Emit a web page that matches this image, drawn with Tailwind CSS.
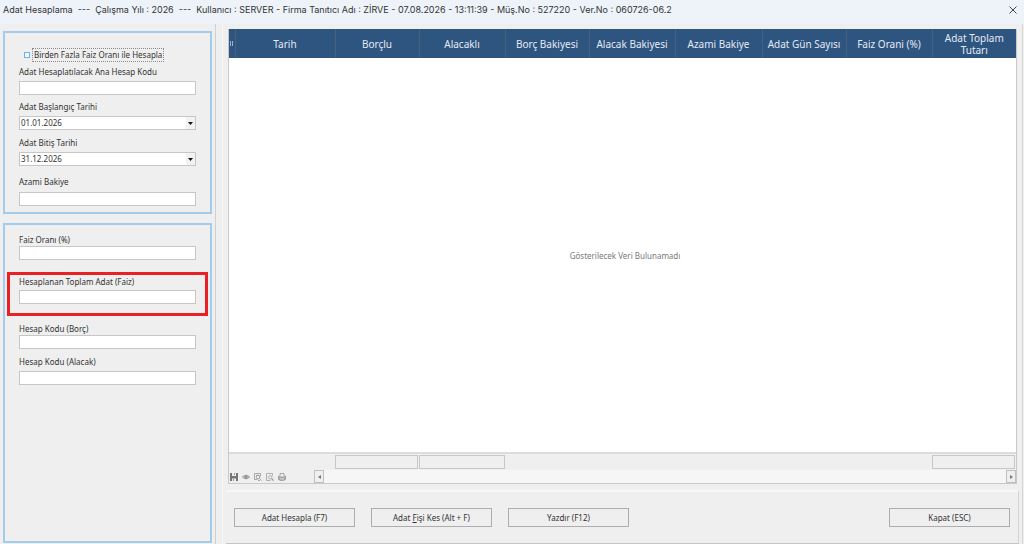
<!DOCTYPE html>
<html lang="tr">
<head>
    <meta charset="UTF-8">
    <meta name="viewport" content="width=device-width, initial-scale=1.0">
    <title>Adat Hesaplama</title>
    <script src="https://cdn.jsdelivr.net/npm/@tailwindcss/browser@4"></script>
</head>
<body class="flex flex-col h-screen overflow-hidden bg-[#efefef] text-[#333333] font-['Noto_Sans',sans-serif] text-[8px] leading-[12px]">
    <header class="flex items-center justify-between h-6 shrink-0 bg-[#eef3fa] pl-[3px] pr-[7px] pb-1 font-['Inter',sans-serif] text-[9px]">
        <h1 class="whitespace-pre">Adat Hesaplama  ---  Çalışma Yılı : 2026  ---  Kullanıcı : SERVER - Firma Tanıtıcı Adı : ZİRVE - 07.08.2026 - 13:11:39 - Müş.No : 527220 - Ver.No : 060726-06.2</h1>
        <button type="button" aria-label="Kapat" class="text-[#444444]">
            <svg class="size-2" viewBox="0 0 8 8" fill="none" stroke="currentColor"><path d="M0.5 0.5l7 7M7.5 0.5l-7 7"/></svg>
        </button>
    </header>

    <main class="flex flex-1 min-h-0">
        <aside class="flex flex-col gap-[9px] w-[216px] shrink-0 border-r border-[#cfcfcf] px-[3px] pt-[7px]">
            <section class="flex flex-col border-2 border-[#a3cbec] px-[14px] pt-4 pb-1.5">
                <div class="flex items-center gap-[3px] pl-[5px]">
                    <input type="checkbox" id="cokluFaiz" class="appearance-none size-[6px] border border-[#6cb2e6] bg-[#f4faff]">
                    <label for="cokluFaiz" class="outline-1 outline-dotted outline-[#8a8a8a] px-px">Birden Fazla Faiz Oranı ile Hesapla</label>
                </div>
                <label for="anaHesap" class="mt-[5px]">Adat Hesaplatılacak Ana Hesap Kodu</label>
                <input type="text" id="anaHesap" class="mt-[3px] h-[14px] w-full bg-white border border-[#c6c6c6] px-px">
                <label for="baslangic" class="mt-1.5">Adat Başlangıç Tarihi</label>
                <div class="relative mt-[3px]">
                    <select id="baslangic" class="block appearance-none h-[14px] w-full bg-white border border-[#c6c6c6] px-px">
                        <option>01.01.2026</option>
                    </select>
                    <svg class="absolute right-px top-px w-[9px] h-3 bg-[#f2f2f2] pointer-events-none" viewBox="0 0 9 12" fill="#111111"><path d="M2 5h5L4.500 8z"/></svg>
                </div>
                <label for="bitis" class="mt-[7px]">Adat Bitiş Tarihi</label>
                <div class="relative mt-[3px]">
                    <select id="bitis" class="block appearance-none h-[14px] w-full bg-white border border-[#c6c6c6] px-px">
                        <option>31.12.2026</option>
                    </select>
                    <svg class="absolute right-px top-px w-[9px] h-3 bg-[#f2f2f2] pointer-events-none" viewBox="0 0 9 12" fill="#111111"><path d="M2 5h5L4.500 8z"/></svg>
                </div>
                <label for="azami" class="mt-[10px]">Azami Bakiye</label>
                <input type="text" id="azami" class="mt-1 h-[14px] w-full bg-white border border-[#c6c6c6] px-px">
            </section>

            <section class="flex flex-col flex-1 border-2 border-[#a3cbec] px-[14px] pt-[9px] mb-px">
                <label for="faizOrani">Faiz Oranı (%)</label>
                <input type="text" id="faizOrani" class="h-[14px] w-full bg-white border border-[#c6c6c6] px-px">
                <div class="relative flex flex-col mt-4">
                    <label for="toplamAdat">Hesaplanan Toplam Adat (Faiz)</label>
                    <input type="text" id="toplamAdat" class="mt-[2px] h-[14px] w-full bg-white border border-[#c6c6c6] px-px">
                    <!-- kırmızı vurgu çerçevesi -->
                    <div class="absolute -inset-x-3 -top-1 -bottom-3 border-[3px] border-[#ea2024] pointer-events-none"></div>
                </div>
                <label for="hesapBorc" class="mt-[19px]">Hesap Kodu (Borç)</label>
                <input type="text" id="hesapBorc" class="h-[14px] w-full bg-white border border-[#c6c6c6] px-px">
                <label for="hesapAlacak" class="mt-[7px]">Hesap Kodu (Alacak)</label>
                <input type="text" id="hesapAlacak" class="mt-[3px] h-[14px] w-full bg-white border border-[#c6c6c6] px-px">
            </section>
        </aside>

        <div class="flex flex-col flex-1 min-w-0 ml-[6px] border-l border-[#f7f7f7] pt-[5px]">
            <div class="flex flex-col flex-1 min-h-0 ml-[5px] mr-[5px] border border-t-0 border-[#c9c9c9]">
                <div class="flex-1 min-h-0">
                    <table class="table-fixed w-full h-full border-collapse">
                        <colgroup>
                            <col class="w-[6px]">
                            <col class="w-[100px]">
                            <col class="w-[84px]">
                            <col class="w-[86px]">
                            <col class="w-[84px]">
                            <col class="w-[86px]">
                            <col class="w-[87px]">
                            <col class="w-[84px]">
                            <col class="w-[86px]">
                            <col>
                        </colgroup>
                        <thead class="bg-[#2e5480] text-[#e4ebf3] text-[10px]">
                            <tr class="h-[29px] *:font-normal *:p-0 *:border-r *:border-[#46607f] *:last:border-r-0">
                                <th><svg class="w-1 h-[5px] mx-auto" viewBox="0 0 4 5" fill="#9db4cf"><path d="M0 0h1v5h-1zM2 0h1v5h-1z"/></svg></th>
                                <th>Tarih</th>
                                <th>Borçlu</th>
                                <th>Alacaklı</th>
                                <th>Borç Bakiyesi</th>
                                <th>Alacak Bakiyesi</th>
                                <th>Azami Bakiye</th>
                                <th>Adat Gün Sayısı</th>
                                <th>Faiz Orani (%)</th>
                                <th>Adat Toplam Tutarı</th>
                            </tr>
                        </thead>
                        <tbody class="bg-white text-[#7a7a7a]">
                            <tr><td colspan="10" class="text-center align-middle pl-[5px] pt-0.5">Gösterilecek Veri Bulunamadı</td></tr>
                        </tbody>
                        <tfoot>
                            <tr class="h-[17px] border-t-2 border-[#dcdcdc] *:p-0">
                                <td></td>
                                <td></td>
                                <td><div class="h-[14px] border border-[#c8c8c8] mr-px"></div></td>
                                <td><div class="h-[14px] border border-[#c8c8c8]"></div></td>
                                <td></td>
                                <td></td>
                                <td></td>
                                <td></td>
                                <td></td>
                                <td><div class="h-[14px] border border-[#c8c8c8] mr-px"></div></td>
                            </tr>
                        </tfoot>
                    </table>
                </div>
                <div class="flex h-[13px] shrink-0">
                    <div class="flex items-center gap-1 w-[85px] pl-px text-[#959595]">
                        <button type="button" aria-label="Kaydet"><svg class="size-2" viewBox="0 0 8 8"><path fill="#777777" d="M0 0h8v8H0z"/><path fill="#eeeeee" d="M2 0h4v3H2zM2 5.500h4V8H2z"/><path fill="#999999" d="M4 0h1v2H4zM3 6h1v2H3z"/></svg></button>
                        <button type="button" aria-label="Göster"><svg class="size-2" viewBox="0 0 8 8" fill="none" stroke="currentColor"><path d="M0.300 4Q4 0.500 7.700 4Q4 7.500 0.300 4z"/><circle cx="4" cy="4" r="1.300" fill="currentColor"/></svg></button>
                        <button type="button" aria-label="Filtrele"><svg class="size-2" viewBox="0 0 8 8" fill="none" stroke="currentColor" stroke-width="0.800"><path d="M0.500 0.500h6v3M0.500 0.500v6h3M2 2.500h3"/><circle cx="4" cy="4" r="1.800"/><path d="M5.300 5.300l2.300 2.300M4 7.500h2"/></svg></button>
                        <button type="button" aria-label="Ara"><svg class="size-2" viewBox="0 0 8 8" fill="none" stroke="currentColor" stroke-width="0.700"><path d="M6.500 2.500v-2h-6v7h4"/><circle cx="4.300" cy="4.300" r="1.700"/><path stroke-width="1.200" d="M5.600 5.600l2 2"/></svg></button>
                        <button type="button" aria-label="Yazdır"><svg class="size-2" viewBox="0 0 8 8" fill="none" stroke="currentColor" stroke-width="0.800"><path d="M2 3V0.500h4V3"/><path fill="#b0b0b0" d="M0.500 3l1.500 1h4l1.500-1v3.500h-7z"/><path stroke="#eeeeee" d="M2 6h4"/><path d="M1.500 7.500h5"/></svg></button>
                    </div>
                    <div class="flex justify-between flex-1 bg-[#f6f6f6]">
                        <button type="button" aria-label="Sola kaydır" class="flex items-center justify-center w-[10px] border border-[#c0c0c0] bg-[#efefef]"><svg class="w-[3px] h-1" viewBox="0 0 3 4" fill="#777777"><path d="M3 0v4L0 2z"/></svg></button>
                        <button type="button" aria-label="Sağa kaydır" class="flex items-center justify-center w-[10px] border border-[#c0c0c0] bg-[#efefef]"><svg class="w-[3px] h-1" viewBox="0 0 3 4" fill="#777777"><path d="M0 0v4l3-2z"/></svg></button>
                    </div>
                </div>
            </div>

            <div class="flex items-center gap-4 h-[54px] shrink-0 mt-[6px] ml-[3px] mr-[3px] pl-2 pr-2 border-t-2 border-b border-r border-t-[#f7f7f7] border-r-[#d4d4d4] border-b-[#c4c4c4]">
                <button type="button" class="w-[121px] h-[19px] border border-[#adadad]">Adat Hesapla (F7)</button>
                <button type="button" class="w-[121px] h-[19px] border border-[#adadad]">Adat <u>F</u>işi Kes (Alt + F)</button>
                <button type="button" class="w-[121px] h-[19px] border border-[#adadad]">Yazdır (F12)</button>
                <button type="button" class="w-[121px] h-[19px] border border-[#adadad] ml-auto">Kapat (ESC)</button>
            </div>
        </div>
        <div class="w-px bg-[#d6d6d6] mr-px"></div>
    </main>
</body>
</html>
